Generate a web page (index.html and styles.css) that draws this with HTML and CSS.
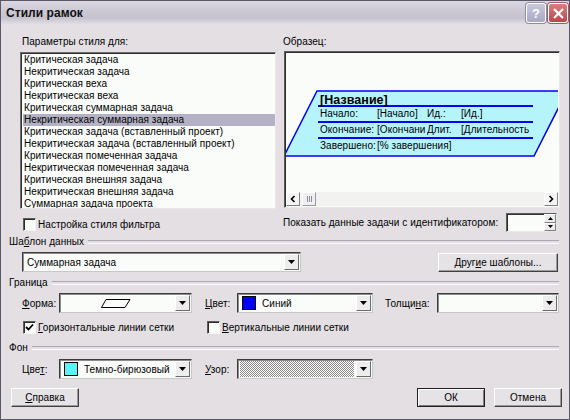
FILE: index.html
```html
<!DOCTYPE html>
<html lang="ru">
<head>
<meta charset="utf-8">
<title>Стили рамок</title>
<link rel="stylesheet" href="styles.css">
</head>
<body>
<div class="window">
  <div class="titlebar">
    <span class="title">Стили рамок</span>
    <div class="tbtns">
      <span class="tb help">?</span>
      <span class="tb close"><svg width="13" height="13" viewBox="0 0 13 13"><path d="M2 2 L11 11 M11 2 L2 11" stroke="#fff" stroke-width="2.2"/></svg></span>
    </div>
  </div>
  <div class="client">
    <div class="top">
      <div class="col-left">
        <div class="lbl">Параметры стиля для:</div>
        <div class="listbox">
          <div class="item">Критическая задача</div>
          <div class="item">Некритическая задача</div>
          <div class="item">Критическая веха</div>
          <div class="item">Некритическая веха</div>
          <div class="item">Критическая суммарная задача</div>
          <div class="item sel">Некритическая суммарная задача</div>
          <div class="item">Критическая задача (вставленный проект)</div>
          <div class="item">Некритическая задача (вставленный проект)</div>
          <div class="item">Критическая помеченная задача</div>
          <div class="item">Некритическая помеченная задача</div>
          <div class="item">Критическая внешняя задача</div>
          <div class="item">Некритическая внешняя задача</div>
          <div class="item">Суммарная задача проекта</div>
        </div>
        <div class="check-row first"><span class="cb"></span><span>Настройка стиля фильтра</span></div>
      </div>
      <div class="col-right">
        <div class="lbl">Образец:</div>
        <div class="preview">
          <div class="canvas">
            <svg class="shape" width="290" height="110" viewBox="0 0 290 110">
              <polygon points="33,39 283,39 250,104 0,104" fill="#b6f4fb" stroke="#0000ff" stroke-width="1.5"/>
            </svg>
            <div class="card">
              <div class="c-title">[Название]</div>
              <div class="c-row"><span>Начало:</span><span>[Начало]</span><span>Ид.:</span><span>[Ид.]</span></div>
              <div class="c-row"><span>Окончание:</span><span>[Окончани</span><span>Длит.</span><span>[Длительность</span></div>
              <div class="c-row last"><span>Завершено:</span><span class="wide">[% завершения]</span></div>
            </div>
          </div>
          <div class="hscroll">
            <span class="sbtn"><svg width="8" height="8" viewBox="0 0 8 8"><path d="M5.5 1 L2.5 4 L5.5 7" fill="none" stroke="#000" stroke-width="1.6"/></svg></span>
            <span class="thumb"><i></i><i></i><i></i></span>
            <span class="track"></span>
            <span class="sbtn"><svg width="8" height="8" viewBox="0 0 8 8"><path d="M2.5 1 L5.5 4 L2.5 7" fill="none" stroke="#000" stroke-width="1.6"/></svg></span>
          </div>
        </div>
        <div class="id-row">
          <span>Показать данные задачи с идентификатором:</span>
          <div class="spin"><span class="spin-in"></span><span class="spin-btns"><span class="sp"><svg width="5" height="3" viewBox="0 0 5 3"><path d="M0 3 L2.5 0 L5 3Z" fill="#000"/></svg></span><span class="sp"><svg width="5" height="3" viewBox="0 0 5 3"><path d="M0 0 L2.5 3 L5 0Z" fill="#000"/></svg></span></span></div>
        </div>
      </div>
    </div>

    <div class="group-h g1"><span>Ша<u>б</u>лон данных</span></div>
    <div class="row tmpl">
      <div class="combo w-tmpl"><span class="cv">Суммарная задача</span><span class="dd"><svg width="7" height="4" viewBox="0 0 7 4"><path d="M0 0 H7 L3.5 4Z" fill="#000"/></svg></span></div>
      <div class="btn other">Друг<u>и</u>е шаблоны...</div>
    </div>

    <div class="group-h g2"><span>Граница</span></div>
    <div class="row fields">
      <span class="flbl l1"><u>Ф</u>орма:</span>
      <div class="combo w-a"><span class="cv center"><svg width="30" height="9" viewBox="0 0 30 9"><polygon points="5,0.5 29,0.5 24,8.5 0.5,8.5" fill="none" stroke="#000" stroke-width="1"/></svg></span><span class="dd"><svg width="7" height="4" viewBox="0 0 7 4"><path d="M0 0 H7 L3.5 4Z" fill="#000"/></svg></span></div>
      <span class="flbl l2"><u>Ц</u>вет:</span>
      <div class="combo w-b"><span class="cv"><span class="sw blue"></span>Синий</span><span class="dd"><svg width="7" height="4" viewBox="0 0 7 4"><path d="M0 0 H7 L3.5 4Z" fill="#000"/></svg></span></div>
      <span class="flbl l3">Толщи<u>н</u>а:</span>
      <div class="combo w-c"><span class="cv"></span><span class="dd"><svg width="7" height="4" viewBox="0 0 7 4"><path d="M0 0 H7 L3.5 4Z" fill="#000"/></svg></span></div>
    </div>
    <div class="row checks">
      <div class="check-row horiz"><span class="cb checked"><svg width="9" height="9" viewBox="0 0 9 9"><path d="M1 4 L3.5 6.5 L8 1.5" fill="none" stroke="#000" stroke-width="1.8"/></svg></span><span><u>Г</u>оризонтальные линии сетки</span></div>
      <div class="check-row"><span class="cb"></span><span><u>В</u>ертикальные линии сетки</span></div>
    </div>

    <div class="group-h g3"><span>Фон</span></div>
    <div class="row fields">
      <span class="flbl l1">Цве<u>т</u>:</span>
      <div class="combo w-a"><span class="cv"><span class="sw cyan"></span>Темно-бирюзовый</span><span class="dd"><svg width="7" height="4" viewBox="0 0 7 4"><path d="M0 0 H7 L3.5 4Z" fill="#000"/></svg></span></div>
      <span class="flbl l2"><u>У</u>зор:</span>
      <div class="combo w-b"><span class="cv pat"></span><span class="dd"><svg width="7" height="4" viewBox="0 0 7 4"><path d="M0 0 H7 L3.5 4Z" fill="#000"/></svg></span></div>
    </div>

    <div class="buttons">
      <div class="btn b-help"><u>С</u>правка</div>
      <div class="btn b-ok">ОК</div>
      <div class="btn b-cancel">Отмена</div>
    </div>
  </div>
</div>
</body>
</html>
```

FILE: styles.css
```css
* { box-sizing: border-box; }
html, body { margin: 0; padding: 0; }
body {
  width: 570px;
  height: 420px;
  overflow: hidden;
  font-family: "Liberation Sans", Arial, sans-serif;
  font-size: 10px;
  letter-spacing: 0.05px;
  color: #000;
  background: #fff;
}
u { text-decoration: underline; text-underline-offset: 1px; }

.window {
  width: 570px;
  height: 420px;
  border: 1px solid #58586a;
  background: #e3dfe3;
  display: flex;
  flex-direction: column;
}

.titlebar {
  height: 24px;
  flex: none;
  display: flex;
  align-items: center;
  padding-left: 5px;
  background: linear-gradient(#dcd8e2 0%, #cbc7d3 45%, #c6c2ce 70%, #e6e2ea 100%);
}
.title {
  font-weight: bold;
  font-size: 12px;
  color: #111;
}
.tbtns {
  margin-left: auto;
  margin-right: 1px;
  display: flex;
  gap: 2px;
}
.tb {
  width: 20px;
  height: 20px;
  border: 1px solid #ffffff;
  border-radius: 3px;
  display: flex;
  align-items: center;
  justify-content: center;
}
.help {
  background: linear-gradient(#c8c8dc, #a8a8c4);
  color: #fff;
  font-weight: bold;
  font-size: 13px;
  box-shadow: 0 0 0 1px #8c8ca8;
}
.close {
  background: linear-gradient(#d88080, #b84848);
  box-shadow: 0 0 0 1px #a06060;
}

.client {
  flex: 1;
  padding: 11px 8px 0 7px;
  display: flex;
  flex-direction: column;
}

.top {
  display: flex;
}
.col-left {
  width: 256px;
  margin-left: 12px;
}
.col-right {
  width: 277px;
  margin-left: 7px;
}
.lbl {
  height: 12px;
  line-height: 12px;
}
.col-left .lbl { padding-left: 2px; }

.listbox {
  margin-top: 4px;
  height: 157px;
  background: #fafcfa;
  border: 1px solid;
  border-color: #6c6c6c #e8e8e8 #e8e8e8 #6c6c6c;
  box-shadow: inset 1px 1px 0 #303030;
  padding: 1px 0 0 2px;
  overflow: hidden;
}
.item {
  height: 12px;
  line-height: 12px;
  padding-left: 1px;
  white-space: nowrap;
}
.item.sel { background: #b3b1c3; }

.check-row {
  display: flex;
  align-items: center;
  height: 16px;
}
.check-row.first { margin-top: 7px; margin-left: 3px; }
.cb {
  width: 13px;
  height: 13px;
  flex: none;
  background: #fafcfa;
  border: 1px solid;
  border-color: #5c5c5c #f4f4f4 #f4f4f4 #5c5c5c;
  box-shadow: inset 1px 1px 0 #2c2c2c;
  margin-right: 2px;
  display: flex;
  align-items: center;
  justify-content: center;
}

.preview {
  margin-top: 3px;
  margin-left: 1px;
  width: 276px;
  height: 157px;
  background: #fafcfa;
  border: 1px solid;
  border-color: #5c5c5c #e8e8e8 #e8e8e8 #5c5c5c;
  box-shadow: inset 1px 1px 0 #303030;
  display: flex;
  flex-direction: column;
  padding: 1px;
}
.canvas {
  flex: 1;
  position: relative;
  overflow: hidden;
}
.shape {
  position: absolute;
  left: -2px;
  top: -1px;
}
.card {
  position: absolute;
  left: 32px;
  top: 41px;
  width: 215px;
}
.c-title {
  height: 13px;
  line-height: 13px;
  font-weight: bold;
  font-size: 12.5px;
  padding-left: 2px;
  border-bottom: 2px solid #0000ff;
}
.c-row {
  display: grid;
  grid-template-columns: 57px 50px 34px 1fr;
  height: 16px;
  line-height: 14px;
  padding-left: 2px;
  border-bottom: 2px solid #0000ff;
  white-space: nowrap;
  overflow: hidden;
}
.c-row span { overflow: hidden; }
.c-row.last { border-bottom: none; }
.c-row .wide { grid-column: 2 / 5; }

.hscroll {
  height: 14px;
  flex: none;
  display: flex;
  background: #f2f2f0;
}
.sbtn {
  width: 14px;
  height: 14px;
  background: #f4f4f4;
  border: 1px solid;
  border-color: #ffffff #808080 #808080 #ffffff;
  display: flex;
  align-items: center;
  justify-content: center;
}
.thumb {
  width: 14px;
  height: 14px;
  margin-left: 2px;
  background: #efefef;
  border: 1px solid;
  border-color: #ffffff #9a9a9a #9a9a9a #ffffff;
  display: flex;
  align-items: center;
  justify-content: center;
  gap: 1px;
}
.thumb i {
  width: 1px;
  height: 6px;
  background: #8a8aa0;
}
.track { flex: 1; }

.id-row {
  margin-top: 5px;
  height: 19px;
  display: flex;
  align-items: center;
}
.spin {
  margin-left: auto;
  margin-right: 3px;
  width: 51px;
  height: 19px;
  display: flex;
  background: #fafcfa;
  border: 1px solid;
  border-color: #5c5c5c #e8e8e8 #e8e8e8 #5c5c5c;
  box-shadow: inset 1px 1px 0 #303030;
}
.spin-in { flex: 1; }
.spin-btns {
  width: 12px;
  display: flex;
  flex-direction: column;
}
.sp {
  flex: 1;
  background: #ececec;
  border: 1px solid;
  border-color: #ffffff #808080 #808080 #ffffff;
  display: flex;
  align-items: center;
  justify-content: center;
}

.group-h {
  height: 12px;
  display: flex;
  align-items: center;
  line-height: 12px;
  padding-left: 1px;
  margin-right: 2px;
}
.group-h::after {
  content: "";
  flex: 1;
  height: 2px;
  margin-left: 4px;
  border-top: 1px solid #aaa8b4;
  border-bottom: 1px solid #fbfbff;
}
.g1 { margin-top: 4px; }
.g2 { margin-top: 5px; }
.g3 { margin-top: 7px; }

.row {
  display: flex;
  align-items: center;
}
.tmpl {
  margin-top: 4px;
  height: 20px;
  padding-left: 14px;
}
.combo {
  height: 20px;
  display: flex;
  align-items: center;
  background: #fafcfa;
  border: 1px solid;
  border-color: #3c3c3c #c8c8c8 #c8c8c8 #3c3c3c;
  box-shadow: inset 1px 1px 0 #8c8c8c;
  padding: 1px 1px 1px 2px;
}
.cv {
  flex: 1;
  display: flex;
  align-items: center;
  height: 100%;
  padding-left: 2px;
  white-space: nowrap;
  overflow: hidden;
}
.cv.center { justify-content: center; padding-right: 8px; }
.dd {
  width: 15px;
  height: 16px;
  flex: none;
  background: #ededed;
  border: 1px solid;
  border-color: #ffffff #6a6a6a #6a6a6a #ffffff;
  display: flex;
  align-items: center;
  justify-content: center;
}
.w-tmpl { width: 279px; }
.w-a { width: 133px; }
.w-b { width: 136px; }
.w-c { width: 122px; }

.btn {
  height: 19px;
  display: flex;
  align-items: center;
  justify-content: center;
  background: #e6e3e6;
  border: 1px solid;
  border-color: #ffffff #404040 #404040 #ffffff;
  box-shadow: inset -1px -1px 0 #9c9c9c;
}
.other {
  width: 120px;
  margin-left: auto;
  margin-right: 3px;
}

.fields {
  height: 20px;
  padding-left: 14px;
}
.g2 + .fields { margin-top: 4px; }
.g3 + .fields { margin-top: 5px; }
.flbl { flex: none; white-space: nowrap; }
.l1 { width: 37px; }
.l2 { width: 32px; margin-left: 13px; }
.l3 { width: 52px; margin-left: 12px; }

.sw {
  width: 14px;
  height: 14px;
  border: 1px solid #000;
  margin-right: 6px;
  flex: none;
}
.sw.blue { background: #0000ff; }
.sw.cyan { background: #55f5f8; }
.cv.pat {
  margin: 1px 2px 1px 0;
  background-color: #ffffff;
  background-image: repeating-conic-gradient(#8a8a8a 0 25%, #ffffff 0 50%);
  background-size: 2px 2px;
}

.checks {
  margin-top: 6px;
  height: 16px;
  padding-left: 15px;
}
.check-row.horiz { width: 184px; }

.buttons {
  margin-top: 9px;
  display: flex;
  align-items: center;
  padding-left: 3px;
}
.b-help { width: 68px; }
.b-ok {
  width: 68px;
  margin-left: auto;
  border-color: #202020;
  box-shadow: inset 1px 1px 0 #ffffff, inset -1px -1px 0 #7c7c7c;
}
.b-cancel { width: 68px; margin-left: 9px; margin-right: -1px; }
```
